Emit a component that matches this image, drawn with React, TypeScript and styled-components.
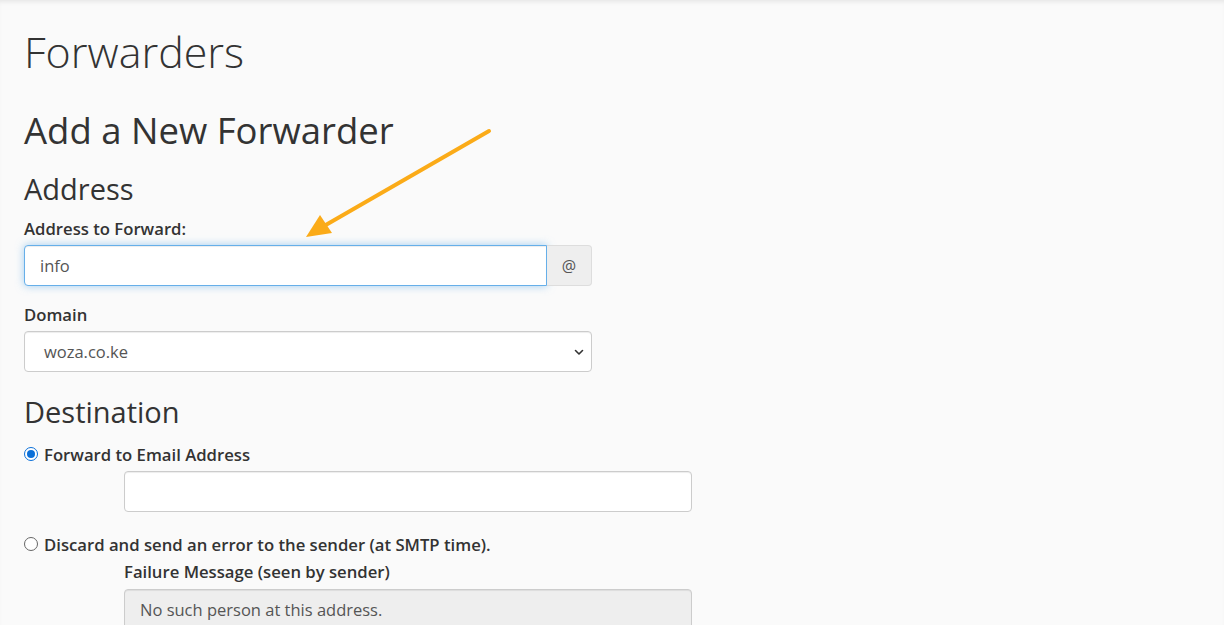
import styled, { createGlobalStyle } from "styled-components";

const GlobalStyle = createGlobalStyle`
  html, body {
    margin: 0;
    padding: 0;
    background: #fafafa;
  }
  body {
    font-family: "Open Sans", "Liberation Sans", sans-serif;
    color: #333;
    font-size: 16px;
  }
`

const Page = styled.div`
  min-height: 625px;
  box-shadow: inset 0 4px 4px -2px rgba(0, 0, 0, 0.08);
  padding: 22px 24px 0 24px;
  position: relative;
  overflow: hidden;
`

const PageTitle = styled.h1`
  font-size: 43px;
  font-weight: 300;
  line-height: 60px;
  margin: 0;
  color: #333;
`

const SectionTitle = styled.h2`
  font-size: 36.5px;
  font-weight: 400;
  line-height: 48px;
  margin: 24px 0 0 0;
  color: #333;
`

const SubTitle = styled.h3<{ $top: number }>`
  font-size: 29px;
  font-weight: 400;
  line-height: 38px;
  margin: ${p => p.$top}px 0 0 0;
  color: #333;
`

const Label = styled.label`
  display: block;
  font-weight: 600;
  font-size: 16.7px;
  line-height: 22px;
  margin: 10px 0 5px 0;
`

const InputGroup = styled.div`
  display: flex;
  width: 568px;
  height: 41px;
`

const TextInput = styled.input<{ $focus?: boolean }>`
  flex: 1;
  height: 41px;
  box-sizing: border-box;
  border: 1px solid ${p => (p.$focus ? "#66afe9" : "#ccc")};
  border-radius: 4px 0 0 4px;
  box-shadow: ${p =>
    p.$focus
      ? "inset 0 1px 1px rgba(0,0,0,.075), 0 0 8px rgba(102,175,233,.6)"
      : "inset 0 1px 1px rgba(0,0,0,.075)"};
  padding: 0 15px;
  font-family: inherit;
  font-size: 16.5px;
  color: #555;
  background: #fff;
  outline: none;
`

const Addon = styled.span`
  width: 45px;
  box-sizing: border-box;
  display: flex;
  align-items: center;
  justify-content: center;
  background: #eee;
  border: 1px solid #ddd;
  border-left: none;
  border-radius: 0 4px 4px 0;
  color: #555;
  font-size: 16px;
`

const Field = styled.div`
  margin-top: 18px;
`

const SelectBox = styled.div`
  width: 568px;
  height: 41px;
  box-sizing: border-box;
  border: 1px solid #ccc;
  border-radius: 4px;
  background: #fff;
  box-shadow: inset 0 1px 1px rgba(0,0,0,.075);
  display: flex;
  align-items: center;
  justify-content: space-between;
  padding: 0 6px 0 19px;
  color: #555;
  font-size: 16.5px;
`

const RadioRow = styled.label<{ $top: number }>`
  display: flex;
  align-items: center;
  gap: 6px;
  font-weight: 600;
  font-size: 16.7px;
  line-height: 22px;
  margin-top: ${p => p.$top}px;
`

const Radio = styled.span<{ $checked?: boolean }>`
  width: 14px;
  height: 14px;
  box-sizing: border-box;
  border-radius: 50%;
  border: ${p => (p.$checked ? "1.5px solid #0a6fd8" : "1px solid #666")};
  background: #fff;
  display: flex;
  align-items: center;
  justify-content: center;
  margin-top: -2px;
  &::after {
    content: "";
    display: ${p => (p.$checked ? "block" : "none")};
    width: 8px;
    height: 8px;
    border-radius: 50%;
    background: #0a6fd8;
  }
`

const Indented = styled.div<{ $top: number }>`
  margin: ${p => p.$top}px 0 0 100px;
  width: 568px;
`

const IndentedLabel = styled.div`
  font-weight: 600;
  font-size: 16.7px;
  line-height: 22px;
  margin-bottom: 6px;
`

const WideInput = styled.div<{ $disabled?: boolean }>`
  height: 41px;
  box-sizing: border-box;
  border: 1px solid #ccc;
  border-radius: 4px;
  background: ${p => (p.$disabled ? "#eee" : "#fff")};
  box-shadow: inset 0 1px 1px rgba(0,0,0,.075);
  display: flex;
  align-items: center;
  padding: 0 15px;
  color: #555;
  font-size: 16.5px;
`

const Arrow = styled.svg`
  position: absolute;
  left: 300px;
  top: 125px;
`

export default function App() {
  return <>
    <GlobalStyle/>
    <Page>
      <PageTitle>Forwarders</PageTitle>
      <SectionTitle>Add a New Forwarder</SectionTitle>
      <SubTitle $top={16}>Address</SubTitle>
      <Label>Address to Forward:</Label>
      <InputGroup>
        <TextInput $focus defaultValue="info"/>
        <Addon>@</Addon>
      </InputGroup>
      <Field>
        <Label>Domain</Label>
        <SelectBox>
          <span>woza.co.ke</span>
          <svg width="12" height="12" viewBox="0 0 12 12">
            <path d="M2.5 4.5 L6 8 L9.5 4.5" fill="none" stroke="#333" strokeWidth="1.6" strokeLinecap="round" strokeLinejoin="round"/>
          </svg>
        </SelectBox>
      </Field>
      <SubTitle $top={21}>Destination</SubTitle>
      <RadioRow $top={13}>
        <Radio $checked/>
        Forward to Email Address
      </RadioRow>
      <Indented $top={5}>
        <WideInput/>
      </Indented>
      <RadioRow $top={22}>
        <Radio/>
        Discard and send an error to the sender (at SMTP time).
      </RadioRow>
      <Indented $top={5}>
        <IndentedLabel>Failure Message (seen by sender)</IndentedLabel>
        <WideInput $disabled>No such person at this address.</WideInput>
      </Indented>
      <Arrow width="200" height="120" viewBox="0 0 200 120">
        <line x1="189" y1="6" x2="24" y2="101" stroke="#fbab18" strokeWidth="4" strokeLinecap="round"/>
        <polygon points="6,112 20,90 32,108" fill="#fbab18"/>
      </Arrow>
    </Page>
  </>
}
